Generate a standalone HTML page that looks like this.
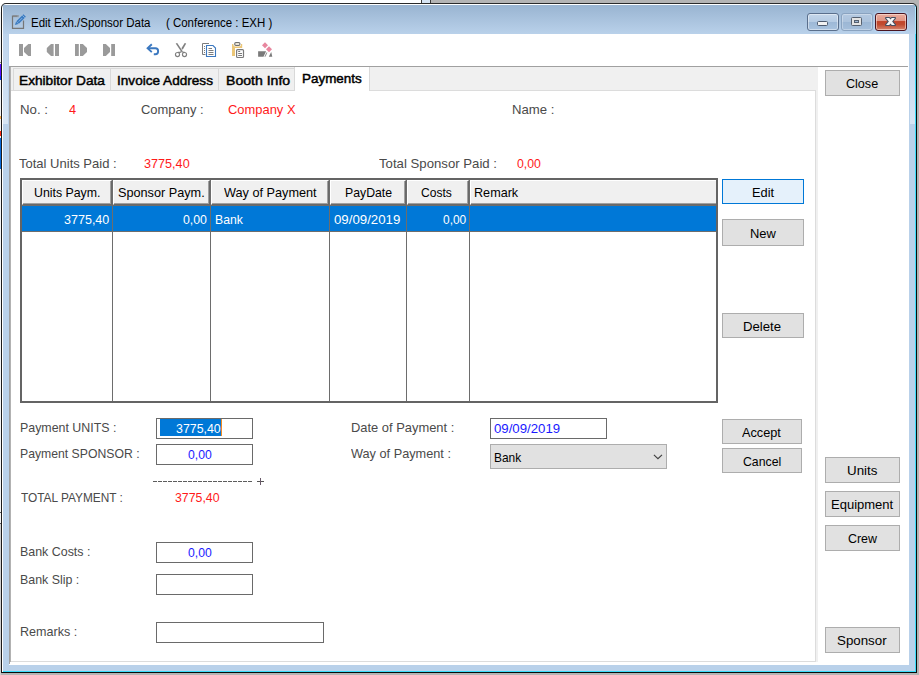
<!DOCTYPE html>
<html><head><meta charset="utf-8"><title>Edit Exh./Sponsor Data</title>
<style>
html,body{margin:0;padding:0}
body{width:919px;height:675px;position:relative;overflow:hidden;background:#b4b4b4;font-family:"Liberation Sans",sans-serif}
div,span,svg{position:absolute;box-sizing:border-box}
.t{white-space:pre;transform-origin:0 0}
/* outside strips */
#bgtopw{left:0;top:0;width:421px;height:3px;background:#fff}
#bgtopl{left:421px;top:0;width:10px;height:3px;background:#d6e4f3;border-left:1px solid #3a3a3a;border-right:1px solid #3a3a3a}
#bgleft{left:0;top:0;width:1px;height:675px;background:#f4f4f4}
/* window */
#win{left:1px;top:3px;width:916px;height:670px;background:#b9d1ea;border:1px solid #0a0a0a;border-top-color:#2a2a2a;border-left-color:#1c1c1c;border-radius:5px 5px 0 0;box-shadow:inset 1px 1px 0 #fff,inset -1px -1px 0 #3adcfa}
#cap{left:3px;top:5px;width:912px;height:29px;background:linear-gradient(#99b4d1,#b9d1ea)}
#client{left:9px;top:34px;width:900px;height:631px;background:#fff}
/* caption buttons */
.cb{top:13px;height:18px;border-radius:3px}
#bmin{left:807px;width:32px;border:1px solid #5a6f8c;background:linear-gradient(#c4d6ea 0,#b5cbe3 49%,#9db8d6 50%,#a9c3df 100%);box-shadow:inset 0 0 0 1px rgba(255,255,255,.45)}
#bmax{left:841px;width:32px;border:1px solid #8aa3c0;background:linear-gradient(#b4c9e1 0,#abc2dc 49%,#9bb6d4 50%,#a5bfdb 100%);box-shadow:inset 0 0 0 1px rgba(255,255,255,.3)}
#bclose{left:875px;width:32px;border:1px solid #4a1420;border-radius:3px;background:linear-gradient(#eaab9d 0,#e09484 44%,#c1452b 47%,#c04a2f 65%,#d58570 100%);box-shadow:inset 0 0 0 1px rgba(255,235,225,.55),0 0 2px 1px rgba(185,218,250,.75)}
/* tab control */
#hline{left:9px;top:66px;width:899px;height:1px;background:#a0a0a0}
#hline2{left:11px;top:67px;width:807px;height:1px;background:#f4f4f4}
#tabbg{left:11px;top:67px;width:807px;height:595px;background:#f0f0f0}
#vline{left:9px;top:66px;width:1px;height:598px;background:#a0a0a0}
#vline2{left:10px;top:67px;width:1px;height:595px;background:#b2b2b2}
#page{left:11px;top:90px;width:805px;height:572px;background:#fff;border:1px solid #dcdcdc;border-left:0}
.tab{top:68px;height:23px;border:1px solid #d9d9d9;background:#f0f0f0}
#tabsel{left:294px;top:67px;width:76px;height:24px;background:#fff;border:1px solid #d9d9d9;border-bottom:0;border-top:0}
/* buttons */
.btn{background:#e1e1e1;border:1px solid #adadad}
.inp{background:#fff;border:1px solid #6a6a6a}
/* grid */
#grid{left:20px;top:178px;width:698px;height:225px;background:#fff;border:2px solid #646464;border-top-color:#646464}
.hd{top:180px;height:25px;background:#f0f0f0;border-top:1px solid #fff;border-left:1px solid #fff;border-bottom:1px solid #696969;border-right:1px solid #696969;box-shadow:inset -1px -1px 0 #a0a0a0}
.gl{top:180px;width:1px;height:221px;background:#6d6d6d}
.sb{-webkit-text-stroke:0.45px #000}

</style></head>
<body>
<div id="bgtopw"></div><div id="bgtopl"></div><div id="bgleft"></div>
<div style="left:0;top:0;width:10px;height:12px;background:#fff"></div>
<div style="left:0;top:62px;width:1px;height:1px;background:#888"></div>
<div style="left:0;top:64px;width:1px;height:16px;background:linear-gradient(#5a10ff 0,#5a10ff 75%,#0030ff 75%)"></div>
<div style="left:0;top:116px;width:1px;height:3px;background:#ffb050"></div>
<div style="left:0;top:131px;width:1px;height:5px;background:#ff2a10"></div>
<div style="left:0;top:138px;width:1px;height:31px;background:#0a6ad8"></div>
<div style="left:0;top:512px;width:1px;height:1px;background:#555"></div>
<div style="left:0;top:523px;width:1px;height:1px;background:#555"></div>
<div style="left:0;top:524px;width:1px;height:151px;background:#cfcfcf"></div>
<div id="win"></div>
<div id="cap"></div>
<div style="left:915px;top:7px;width:1px;height:27px;background:linear-gradient(#b5e9ff,#8fe4ff)"></div>
<div style="left:3px;top:34px;width:5px;height:90px;background:linear-gradient(#bdd4ec,#d7e5f4)"></div>
<div style="left:910px;top:34px;width:5px;height:90px;background:linear-gradient(#bdd4ec,#d7e5f4)"></div>
<div id="client"></div>
<!-- caption buttons -->
<div id="bmin" class="cb"></div><div id="bmax" class="cb"></div><div id="bclose" class="cb"></div>
<svg style="left:800px;top:5px" width="119" height="35" viewBox="800 5 119 35">
 <rect x="817.5" y="21.5" width="10" height="4" rx="1" fill="#f2f2f2" stroke="#4d5a6e" stroke-width="1"/>
 <rect x="851.5" y="17.5" width="10" height="8" rx="1" fill="#e4e4e4" stroke="#55606f" stroke-width="1"/>
 <rect x="854.5" y="20.5" width="4" height="2" fill="#9fb7d4" stroke="#55606f" stroke-width="1"/>
 <path d="M886 18h3.2l1.3 1.6 1.3-1.6h3.2l-2.9 3.5 2.9 3.5h-3.2l-1.3-1.6-1.3 1.6h-3.2l2.9-3.5z" fill="#f7f7f7" stroke="#465062" stroke-width="2" stroke-linejoin="round" paint-order="stroke"/>
</svg>
<!-- window icon -->
<svg style="left:10px;top:12px" width="20" height="20" viewBox="10 12 20 20">
 <path d="M17.5 16.2h-5v12.2h11v-7.8" fill="none" stroke="#767676" stroke-width="1.2"/>
 <path d="M14 15v2.2M16 15v2.2M18 15v2.2" stroke="#858585" stroke-width="1"/>
 <path d="M14.9 25.1l1.2-3.6 2.4 2.4z" fill="#3b7cc2"/>
 <path d="M16.4 21.2l7-7 2.5 2.5-7 7z" fill="#3b7cc2"/>
 <path d="M18.6 21.6l3.6-3.6" stroke="#b5cfec" stroke-width=".6"/>
 <path d="M22.3 15.3l2.4 2.4" stroke="#c3d8ee" stroke-width=".6"/>
</svg>
<!-- toolbar icons -->
<svg style="left:9px;top:36px" width="300" height="28" viewBox="9 36 300 28">
 <g fill="#9a9a9a">
  <rect x="19" y="44" width="4" height="12"/><path d="M31 44h-2.7l-4.3 4v4l4.3 4h2.7z"/>
  <path d="M53.6 44h-2.6l-4.2 4v4l4.2 4h2.6z"/><rect x="55" y="44" width="4" height="12"/>
  <rect x="75" y="44" width="3.8" height="12"/><path d="M80 44h2.8l4.2 4v4l-4.2 4h-2.8z"/>
  <path d="M103 44h2.8l4.2 4v4l-4.2 4h-2.8z"/><rect x="111.2" y="44" width="3.8" height="12"/>
 </g>
 <!-- undo -->
 <path d="M151.8 44.3l-4.2 3.9 4.2 3.9" fill="none" stroke="#3b78c0" stroke-width="1.9"/>
 <path d="M148 48.2h7.4a2.7 2.7 0 0 1 2.7 2.7v0.7a2.7 2.7 0 0 1 -2.7 2.7h-1.6" fill="none" stroke="#3b78c0" stroke-width="1.9"/>
 <!-- scissors -->
 <g fill="#808080">
  <path d="M175.7 43.4l1.5-.5 5.4 8.2-1.2.9z"/>
  <path d="M186.2 43.4l-1.5-.5-3.3 5.3 1.3 1.6z"/>
 </g>
 <g stroke="#808080" fill="none" stroke-width="1.15">
  <path d="M181.6 51.5l-1.6.8h-2.2M182.2 51.5l1 .8h1.6"/>
  <circle cx="177.5" cy="54.5" r="2.05"/><circle cx="184.5" cy="54.5" r="2.05"/>
 </g>
 <!-- copy -->
 <g fill="none">
  <path d="M209 43.5h-6.5v11h3" stroke="#7c7c7c" stroke-width="1"/>
  <path d="M204 46.5h1M204 48.5h1M204 50.5h1M204 52.5h1" stroke="#7c7c7c" stroke-width="1"/>
  <path d="M206.5 45.5h6.5l2.5 2.5v8.5h-9z" fill="#fff" stroke="#3b78c0" stroke-width="1.1"/>
  <path d="M208.5 48.5h3.5M208.5 50.5h5M208.5 52.5h5M208.5 54.5h5" stroke="#7c7c7c" stroke-width="1"/>
 </g>
 <!-- paste -->
 <g>
  <path d="M232 44h10.2v12h-10.2z" fill="#ecc778"/>
  <rect x="233.4" y="41.2" width="7.6" height="5.3" rx="1.8" fill="#fff"/>
  <rect x="234.7" y="42.5" width="5.2" height="3" rx="1.2" fill="#e9e2d4" stroke="#6f6f6f" stroke-width="1.1"/>
  <rect x="235" y="48" width="10" height="11" fill="#fff"/>
  <rect x="236.6" y="49.6" width="6.9" height="7.9" rx="1" fill="#fff" stroke="#7a7a7a" stroke-width="1.2"/>
  <path d="M238.2 51.5h2M238.2 53.5h3.8M238.2 55.5h3.8" stroke="#7a7a7a" stroke-width="1"/>
 </g>
 <!-- eraser -->
 <g>
  <path d="M258.1 51.2h8l-2.6 5.6h-5.4z" fill="#7a7a7a"/>
  <path d="M267.4 52.6l-2 4.2h-1l2-4.2z" fill="#8a8a8a"/>
  <path d="M271.2 51.9l1.1 4.9h-3.5z" fill="#7a7a7a"/>
  <path d="M265 42.3l3 3-3 3-3-3zM269 46.2l3 3-3 3-3-3z" fill="#e8879f"/>
 </g>
</svg>
<!-- tab control -->
<div id="hline"></div><div id="hline2"></div>
<div id="tabbg"></div><div id="vline"></div><div id="vline2"></div>
<div id="page"></div>
<div class="tab" style="left:13px;width:98px"></div>
<div class="tab" style="left:110px;width:109px"></div>
<div class="tab" style="left:218px;width:78px"></div>
<div id="tabsel"></div>
<!-- grid -->
<div id="grid"></div>
<div class="hd" style="left:22px;width:90px"></div>
<div class="hd" style="left:113px;width:97px"></div>
<div class="hd" style="left:211px;width:118px"></div>
<div class="hd" style="left:330px;width:76px"></div>
<div class="hd" style="left:407px;width:62px"></div>
<div class="hd" style="left:470px;width:246px;border-right:0;box-shadow:inset 0 -1px 0 #a0a0a0"></div>
<div style="left:22px;top:205px;width:694px;height:1px;background:#6d6d6d"></div>
<div style="left:22px;top:206px;width:694px;height:25px;background:#0078d7"></div>
<div style="left:22px;top:231px;width:694px;height:1px;background:#6d6d6d"></div>
<div class="gl" style="left:112px"></div><div class="gl" style="left:210px"></div><div class="gl" style="left:329px"></div><div class="gl" style="left:406px"></div><div class="gl" style="left:469px"></div>
<!-- buttons -->
<div class="btn" style="left:722px;top:179px;width:82px;height:25px;background:#e5f1fb;border-color:#0078d7"></div>
<div class="btn" style="left:722px;top:219px;width:82px;height:27px"></div>
<div class="btn" style="left:722px;top:313px;width:82px;height:25px"></div>
<div class="btn" style="left:722px;top:419px;width:80px;height:25px"></div>
<div class="btn" style="left:722px;top:448px;width:80px;height:25px"></div>
<div class="btn" style="left:825px;top:70px;width:75px;height:26px"></div>
<div class="btn" style="left:825px;top:457px;width:75px;height:26px"></div>
<div class="btn" style="left:825px;top:491px;width:75px;height:26px"></div>
<div class="btn" style="left:825px;top:525px;width:75px;height:26px"></div>
<div class="btn" style="left:825px;top:627px;width:75px;height:26px"></div>
<!-- inputs -->
<div class="inp" style="left:156px;top:418px;width:97px;height:21px"></div>
<div style="left:160px;top:419px;width:61px;height:17px;background:#0078d7"></div>
<div style="left:221px;top:419px;width:1px;height:17px;background:#f08a24"></div>
<div class="inp" style="left:156px;top:444px;width:97px;height:21px"></div>
<div class="inp" style="left:156px;top:542px;width:97px;height:21px"></div>
<div class="inp" style="left:156px;top:574px;width:97px;height:21px"></div>
<div class="inp" style="left:156px;top:622px;width:168px;height:21px"></div>
<div class="inp" style="left:490px;top:418px;width:117px;height:21px"></div>
<div class="btn" style="left:490px;top:444px;width:177px;height:25px"></div>
<svg style="left:650px;top:450px" width="16" height="14" viewBox="650 450 16 14"><path d="M653.9 454.8l4.05 3.9 4.05-3.9" fill="none" stroke="#404040" stroke-width="1.15"/></svg>
<!-- dashes -->
<div style="left:153px;top:481px;width:99px;height:1px;background:repeating-linear-gradient(90deg,#5c5c5c 0,#5c5c5c 3.7px,transparent 3.7px,transparent 5px)"></div>
<div style="left:257px;top:481px;width:7px;height:1px;background:#555"></div><div style="left:260px;top:478px;width:1px;height:7px;background:#6a5a6a"></div>

<span class="t" style="left:30.71px;top:17.42px;font-size:12.5px;line-height:12.5px;color:#000;font-weight:400;transform:scaleX(0.9198)">Edit Exh./Sponsor Data</span>
<span class="t" style="left:165.83px;top:17.42px;font-size:12.5px;line-height:12.5px;color:#000;font-weight:400;transform:scaleX(0.9156)">( Conference : EXH )</span>
<span class="t sb" style="left:18.50px;top:73.60px;font-size:13px;line-height:13px;color:#000;font-weight:400;transform:scaleX(1.0526)">Exhibitor Data</span>
<span class="t sb" style="left:116.67px;top:73.60px;font-size:13px;line-height:13px;color:#000;font-weight:400;transform:scaleX(1.0453)">Invoice Address</span>
<span class="t sb" style="left:225.99px;top:73.60px;font-size:13px;line-height:13px;color:#000;font-weight:400;transform:scaleX(1.0823)">Booth Info</span>
<span class="t sb" style="left:301.91px;top:71.60px;font-size:13px;line-height:13px;color:#000;font-weight:400;transform:scaleX(1.0331)">Payments</span>
<span class="t" style="left:19.51px;top:102.70px;font-size:13px;line-height:13px;color:#4a4a4a;font-weight:400;transform:scaleX(1.0170)">No. :</span>
<span class="t" style="left:68.64px;top:102.70px;font-size:13px;line-height:13px;color:#ff1a1a;font-weight:400;transform:scaleX(0.9850)">4</span>
<span class="t" style="left:140.87px;top:102.70px;font-size:13px;line-height:13px;color:#4a4a4a;font-weight:400;transform:scaleX(0.9955)">Company :</span>
<span class="t" style="left:227.53px;top:102.70px;font-size:13px;line-height:13px;color:#ff1a1a;font-weight:400;transform:scaleX(0.9943)">Company X</span>
<span class="t" style="left:511.56px;top:102.70px;font-size:13px;line-height:13px;color:#4a4a4a;font-weight:400;transform:scaleX(1.0122)">Name :</span>
<span class="t" style="left:18.86px;top:156.60px;font-size:13px;line-height:13px;color:#4a4a4a;font-weight:400;transform:scaleX(1.0011)">Total Units Paid :</span>
<span class="t" style="left:143.67px;top:156.60px;font-size:13px;line-height:13px;color:#ff1a1a;font-weight:400;transform:scaleX(0.9716)">3775,40</span>
<span class="t" style="left:378.80px;top:156.60px;font-size:13px;line-height:13px;color:#4a4a4a;font-weight:400;transform:scaleX(1.0140)">Total Sponsor Paid :</span>
<span class="t" style="left:516.98px;top:156.60px;font-size:13px;line-height:13px;color:#ff1a1a;font-weight:400;transform:scaleX(0.9471)">0,00</span>
<span class="t" style="left:33.56px;top:185.70px;font-size:13px;line-height:13px;color:#000;font-weight:400;transform:scaleX(0.9489)">Units Paym.</span>
<span class="t" style="left:117.99px;top:185.70px;font-size:13px;line-height:13px;color:#000;font-weight:400;transform:scaleX(0.9754)">Sponsor Paym.</span>
<span class="t" style="left:223.75px;top:185.70px;font-size:13px;line-height:13px;color:#000;font-weight:400;transform:scaleX(0.9761)">Way of Payment</span>
<span class="t" style="left:344.87px;top:185.70px;font-size:13px;line-height:13px;color:#000;font-weight:400;transform:scaleX(0.9438)">PayDate</span>
<span class="t" style="left:420.62px;top:185.70px;font-size:13px;line-height:13px;color:#000;font-weight:400;transform:scaleX(0.9277)">Costs</span>
<span class="t" style="left:473.67px;top:185.70px;font-size:13px;line-height:13px;color:#000;font-weight:400;transform:scaleX(0.9708)">Remark</span>
<span class="t" style="left:63.67px;top:212.60px;font-size:13px;line-height:13px;color:#fff;font-weight:400;transform:scaleX(0.9643)">3775,40</span>
<span class="t" style="left:182.88px;top:212.60px;font-size:13px;line-height:13px;color:#fff;font-weight:400;transform:scaleX(0.9475)">0,00</span>
<span class="t" style="left:214.95px;top:212.60px;font-size:13px;line-height:13px;color:#fff;font-weight:400;transform:scaleX(0.9381)">Bank</span>
<span class="t" style="left:333.84px;top:212.60px;font-size:13px;line-height:13px;color:#fff;font-weight:400;transform:scaleX(1.0191)">09/09/2019</span>
<span class="t" style="left:442.67px;top:212.60px;font-size:13px;line-height:13px;color:#fff;font-weight:400;transform:scaleX(0.9169)">0,00</span>
<span class="t" style="left:751.65px;top:185.70px;font-size:13px;line-height:13px;color:#000;font-weight:400;transform:scaleX(0.9863)">Edit</span>
<span class="t" style="left:749.60px;top:226.60px;font-size:13px;line-height:13px;color:#000;font-weight:400;transform:scaleX(0.9945)">New</span>
<span class="t" style="left:742.63px;top:319.80px;font-size:13px;line-height:13px;color:#000;font-weight:400;transform:scaleX(1.0126)">Delete</span>
<span class="t" style="left:741.61px;top:425.70px;font-size:13px;line-height:13px;color:#000;font-weight:400;transform:scaleX(0.9781)">Accept</span>
<span class="t" style="left:742.71px;top:454.70px;font-size:13px;line-height:13px;color:#000;font-weight:400;transform:scaleX(0.9445)">Cancel</span>
<span class="t" style="left:845.75px;top:76.80px;font-size:13px;line-height:13px;color:#000;font-weight:400;transform:scaleX(0.9673)">Close</span>
<span class="t" style="left:846.88px;top:463.70px;font-size:13px;line-height:13px;color:#000;font-weight:400;transform:scaleX(1.0274)">Units</span>
<span class="t" style="left:830.59px;top:497.70px;font-size:13px;line-height:13px;color:#000;font-weight:400;transform:scaleX(1.0010)">Equipment</span>
<span class="t" style="left:847.65px;top:531.70px;font-size:13px;line-height:13px;color:#000;font-weight:400;transform:scaleX(0.9567)">Crew</span>
<span class="t" style="left:836.87px;top:633.80px;font-size:13px;line-height:13px;color:#000;font-weight:400;transform:scaleX(1.0251)">Sponsor</span>
<span class="t" style="left:19.66px;top:420.70px;font-size:13px;line-height:13px;color:#4a4a4a;font-weight:400;transform:scaleX(0.9536)">Payment UNITS :</span>
<span class="t" style="left:19.73px;top:446.70px;font-size:13px;line-height:13px;color:#4a4a4a;font-weight:400;transform:scaleX(0.9400)">Payment SPONSOR :</span>
<span class="t" style="left:20.72px;top:490.70px;font-size:13px;line-height:13px;color:#4a4a4a;font-weight:400;transform:scaleX(0.9117)">TOTAL PAYMENT :</span>
<span class="t" style="left:19.65px;top:544.70px;font-size:13px;line-height:13px;color:#4a4a4a;font-weight:400;transform:scaleX(0.9558)">Bank Costs :</span>
<span class="t" style="left:19.66px;top:572.70px;font-size:13px;line-height:13px;color:#4a4a4a;font-weight:400;transform:scaleX(0.9531)">Bank Slip :</span>
<span class="t" style="left:19.57px;top:624.70px;font-size:13px;line-height:13px;color:#4a4a4a;font-weight:400;transform:scaleX(0.9660)">Remarks :</span>
<span class="t" style="left:175.74px;top:421.70px;font-size:13px;line-height:13px;color:#fff;font-weight:400;transform:scaleX(0.9522)">3775,40</span>
<span class="t" style="left:187.88px;top:447.80px;font-size:13px;line-height:13px;color:#1a1aff;font-weight:400;transform:scaleX(0.9397)">0,00</span>
<span class="t" style="left:174.60px;top:490.70px;font-size:13px;line-height:13px;color:#ff1a1a;font-weight:400;transform:scaleX(0.9480)">3775,40</span>
<span class="t" style="left:187.88px;top:545.80px;font-size:13px;line-height:13px;color:#1a1aff;font-weight:400;transform:scaleX(0.9397)">0,00</span>
<span class="t" style="left:350.77px;top:420.70px;font-size:13px;line-height:13px;color:#4a4a4a;font-weight:400;transform:scaleX(0.9928)">Date of Payment :</span>
<span class="t" style="left:350.77px;top:446.70px;font-size:13px;line-height:13px;color:#4a4a4a;font-weight:400;transform:scaleX(0.9786)">Way of Payment :</span>
<span class="t" style="left:493.94px;top:422.30px;font-size:13px;line-height:13px;color:#1a1aff;font-weight:400;transform:scaleX(1.0162)">09/09/2019</span>
<span class="t" style="left:493.55px;top:450.80px;font-size:13px;line-height:13px;color:#000;font-weight:400;transform:scaleX(0.9178)">Bank</span>
</body></html>
